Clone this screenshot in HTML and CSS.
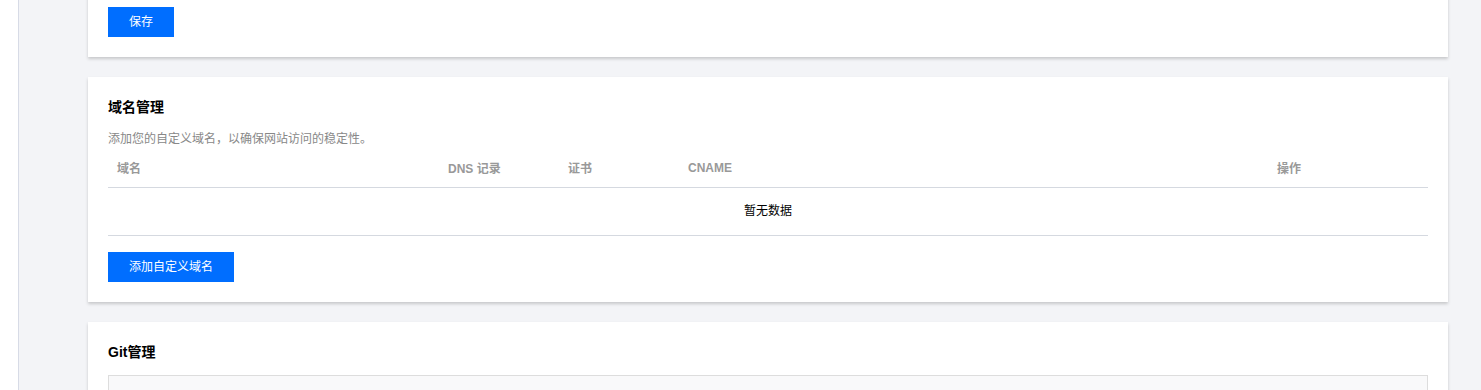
FILE: index.html
```html
<!DOCTYPE html>
<html lang="zh-CN">
<head>
<meta charset="utf-8">
<title>设置</title>
<link rel="stylesheet" href="styles.css">
</head>
<body>
<div class="layout">
  <aside class="sidebar"></aside>
  <main class="main">
    <section class="card card-first">
      <button class="btn">保存</button>
    </section>

    <section class="card">
      <h2 class="card-title">域名管理</h2>
      <p class="card-desc">添加您的自定义域名，以确保网站访问的稳定性。</p>
      <div class="table">
        <div class="thead">
          <div class="col c1">域名</div>
          <div class="col c2">DNS 记录</div>
          <div class="col c3">证书</div>
          <div class="col c4">CNAME</div>
          <div class="col c5">操作</div>
        </div>
        <div class="empty">暂无数据</div>
      </div>
      <button class="btn btn-wide">添加自定义域名</button>
    </section>

    <section class="card">
      <h2 class="card-title">Git管理</h2>
      <div class="git-box"></div>
    </section>
  </main>
</div>
</body>
</html>
```

FILE: styles.css
```css
html, body {
  margin: 0;
  padding: 0;
  height: 390px;
  overflow: hidden;
  font-family: "Liberation Sans", "Noto Sans CJK SC", sans-serif;
  color: #000;
}

.layout {
  display: flex;
  height: 390px;
  overflow: hidden;
}

.sidebar {
  width: 18px;
  flex: none;
  background: #fff;
  border-right: 1px solid #d7dbe6;
}

.main {
  flex: 1;
  background: #f3f4f7;
  padding: 0 33px 0 69px;
  display: flex;
  flex-direction: column;
  gap: 20px;
}

.card {
  background: #fff;
  box-shadow: 0 2px 3px 0 rgba(0, 0, 0, 0.18);
  padding: 20px;
}

.card-first {
  margin-top: -13px;
}

.btn {
  display: block;
  height: 30px;
  min-width: 66px;
  padding: 0 20px;
  border: none;
  background: #006eff;
  color: #fff;
  font-family: inherit;
  font-size: 12px;
  line-height: 30px;
  cursor: pointer;
}

.btn-wide {
  margin-top: 16px;
  padding: 0 21px;
}

.card-title {
  margin: 0 0 13px;
  font-size: 14px;
  line-height: 20px;
  font-weight: bold;
}

.card-desc {
  margin: 0;
  font-size: 12px;
  line-height: 18px;
  color: #888;
}

.thead {
  display: flex;
  height: 39px;
  align-items: center;
  border-bottom: 1px solid #d5d9e0;
}

.col {
  font-size: 12px;
  font-weight: bold;
  color: #999;
  padding-left: 10px;
  box-sizing: border-box;
}

.c1 { width: 330px; padding-left: 9px; }
.c2 { width: 120px; }
.c3 { width: 120px; }
.c4 { width: 589px; }
.c5 { flex: 1; }

.empty {
  height: 47px;
  line-height: 47px;
  text-align: center;
  font-size: 12px;
  color: #000;
  border-bottom: 1px solid #d5d9e0;
}

.git-box {
  height: 80px;
  background: #f9f9fa;
  border: 1px solid #dddddd;
}
```
